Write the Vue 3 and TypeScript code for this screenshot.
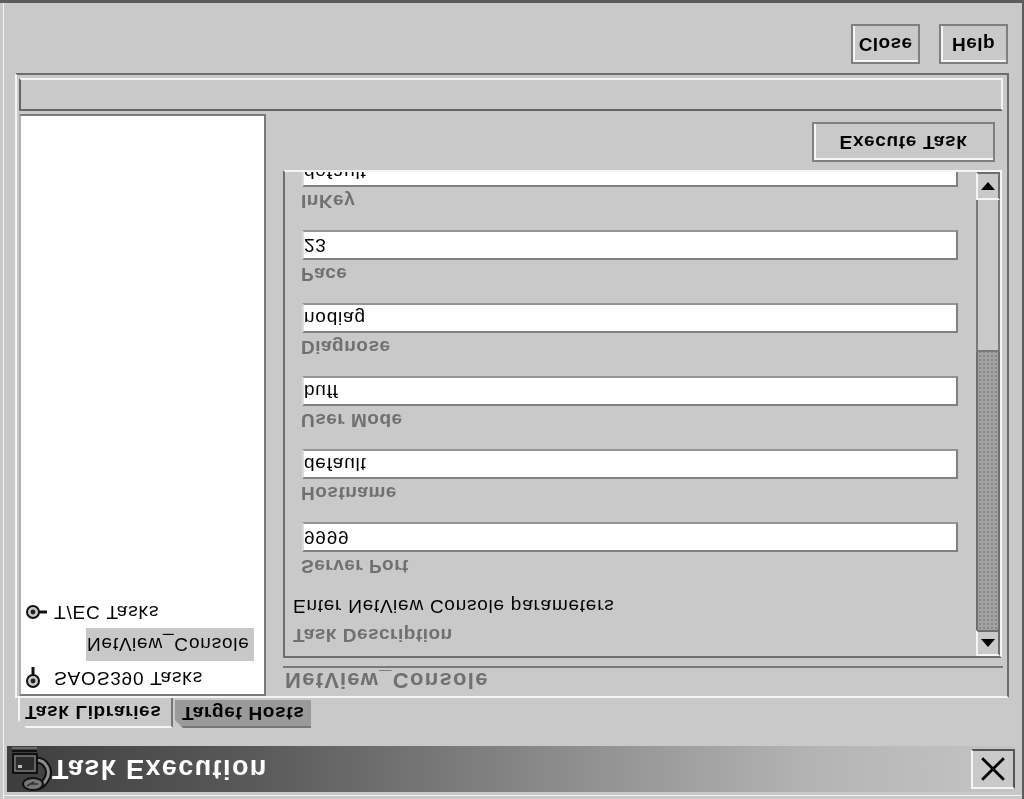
<script setup lang="ts">
interface Field { label: string; value: string }
const fields: Field[] = [
  { label: 'Server Port', value: '9999' },
  { label: 'Hostname', value: 'default' },
  { label: 'User Mode', value: 'buff' },
  { label: 'Diagnose', value: 'nodiag' },
  { label: 'Pace', value: '23' },
  { label: 'InKey', value: 'default' },
]
</script>

<template>
  <div class="window">
    <header class="title">
      <svg class="title-icon" viewBox="0 0 46 46" width="46" height="46">
        <path d="M28 32 C38 32 44 21 38 12 C35 7 32 5 28 5" fill="none" stroke="#111" stroke-width="7" />
        <path d="M28 32 C38 32 44 21 38 12 C35 7 32 5 28 5" fill="none" stroke="#8c8c8c" stroke-width="3" />
        <ellipse cx="25" cy="8" rx="10" ry="6" fill="#777" stroke="#111" stroke-width="2" />
        <path d="M21 8 H30 M19 6 L26 10" stroke="#333" stroke-width="1.5" />
        <rect x="5" y="19" width="24" height="19" fill="#2c2c2c" stroke="#111" stroke-width="2" />
        <rect x="7" y="21" width="20" height="15" fill="none" stroke="#9a9a9a" stroke-width="1" />
        <rect x="10" y="24" width="4" height="3" fill="#bbb" />
        <path d="M4 41 H29" stroke="#111" stroke-width="2" />
        <path d="M4 44 H29" stroke="#777" stroke-width="1.5" />
      </svg>
      <span class="title-text">Task Execution</span>
      <button class="close-x" type="button" aria-label="Close">
        <svg viewBox="0 0 24 24" width="26" height="26">
          <path d="M2 2 L22 22 M22 2 L2 22" stroke="#000" stroke-width="2.6" fill="none" />
        </svg>
      </button>
    </header>

    <nav class="tabs">
      <div class="tab active">Task Libraries</div>
      <div class="tab">Target Hosts</div>
    </nav>

    <section class="frame">
      <div class="main">
        <aside class="tree">
          <div class="node">
            <svg class="knob" viewBox="0 0 16 22" width="16" height="22">
              <circle cx="8" cy="8" r="6" fill="#c8c8c8" stroke="#111" stroke-width="2" />
              <circle cx="8" cy="8" r="2.4" fill="#222" />
              <path d="M8 14 V22" stroke="#111" stroke-width="3" />
            </svg>
            <span>SAOS390 Tasks</span>
          </div>
          <div class="leaf"><span class="selected">NetView_Console</span></div>
          <div class="node">
            <svg class="knob" viewBox="0 0 22 16" width="22" height="16">
              <circle cx="8" cy="8" r="6" fill="#c8c8c8" stroke="#111" stroke-width="2" />
              <circle cx="8" cy="8" r="2.4" fill="#222" />
              <path d="M14 8 H22" stroke="#111" stroke-width="3" />
            </svg>
            <span class="tec">T/EC Tasks</span>
          </div>
        </aside>

        <div class="detail">
          <div class="detail-head">NetView_Console</div>
          <div class="panel">
            <div class="scroll-content">
              <div class="caption">Task Description</div>
              <div class="description">Enter NetView Console parameters</div>
              <div v-for="f in fields" :key="f.label" class="field">
                <div class="caption">{{ f.label }}</div>
                <div class="input">{{ f.value }}</div>
              </div>
            </div>
            <div class="scrollbar">
              <div class="arrow">
                <svg viewBox="0 0 14 8" width="14" height="8"><path d="M0 8 H14 L7 0 Z" fill="#000" /></svg>
              </div>
              <div class="trough"></div>
              <div class="thumb"></div>
              <div class="arrow last">
                <svg viewBox="0 0 14 8" width="14" height="8"><path d="M0 0 H14 L7 8 Z" fill="#000" /></svg>
              </div>
            </div>
          </div>
          <div class="run-row">
            <button class="btn run" type="button">Execute Task</button>
          </div>
        </div>
      </div>
      <div class="status"></div>
    </section>

    <footer class="actions">
      <button class="btn small" type="button">Close</button>
      <button class="btn small" type="button">Help</button>
    </footer>
  </div>
</template>

<style scoped>
.window {
  width: 1024px;
  height: 799px;
  box-sizing: border-box;
  padding-top: 7px;
  overflow: hidden;
  background: #c9c9c9;
  color: #000;
  font: 19px "Liberation Sans", Arial, sans-serif;
  transform: scaleY(-1);
  filter: blur(0.6px);
  box-shadow:
    inset 0 -3px 0 #5c5c5c,
    inset -2px 0 0 #5c5c5c,
    inset 3px 0 0 #c9c9c9,
    inset 4px 0 0 #f2f2f2,
    inset 0 3px 0 #c9c9c9,
    inset 0 4px 0 #f2f2f2;
}

.title {
  height: 46px;
  margin: 0 9px 0 7px;
  display: flex;
  align-items: center;
  background: linear-gradient(90deg, #3e3e3e 0%, #5a5a5a 25%, #8c8c8c 55%, #b4b4b4 80%, #c4c4c4 100%);
}
.title-icon { margin-left: 1px; flex: none; }
.title-text {
  margin-left: -2px;
  font-size: 27px;
  font-weight: 700;
  letter-spacing: 1.4px;
  color: #fff;
}
.close-x {
  margin-left: auto;
  width: 44px;
  height: 40px;
  padding: 0;
  display: flex;
  align-items: center;
  justify-content: center;
  background: #c9c9c9;
  border: 2px solid;
  border-color: #f5f5f5 #555 #555 #f5f5f5;
}

.tabs {
  height: 30px;
  margin: 18px 0 0 18px;
  display: flex;
  align-items: flex-start;
  gap: 2px;
}
.tab {
  height: 28px;
  width: 136px;
  box-sizing: border-box;
  padding-left: 7px;
  display: flex;
  align-items: center;
  background: #9a9a9a;
  border-top: 2px solid #777;
  font-weight: 700;
  letter-spacing: 0.65px;
  clip-path: polygon(8px 0, 100% 0, 100% 100%, 0 100%, 0 8px);
}
.tab.active {
  height: 30px;
  width: 155px;
  background: #c9c9c9;
  border-top: 2px solid #f5f5f5;
  border-left: 2px solid #f5f5f5;
  border-right: 2px solid #777;
  padding-left: 5px;
}

.frame {
  width: 994px;
  height: 625px;
  margin-left: 15px;
  box-sizing: border-box;
  padding: 0 4px 3px 2px;
  display: flex;
  flex-direction: column;
  border: 2px solid;
  border-color: #f5f5f5 #6e6e6e #6e6e6e #f5f5f5;
}
.main {
  flex: 1;
  min-height: 0;
  display: flex;
}
.status {
  height: 33px;
  margin-top: 3px;
  box-sizing: border-box;
  border: 2px solid;
  border-color: #666 #f5f5f5 #f5f5f5 #666;
}

.tree {
  width: 247px;
  box-sizing: border-box;
  flex: none;
  background: #fff;
  border: 2px solid #7a7a7a;
  border-left-color: #b0b0b0;
  padding-top: 1px;
}
.node {
  display: flex;
  align-items: center;
  height: 30px;
  padding-left: 4px;
  letter-spacing: 0.85px;
}
.node span { margin-left: 13px; }
.node .tec { margin-left: 7px; }
.knob { flex: none; }
.leaf {
  height: 36px;
  padding-left: 65px;
  display: flex;
  align-items: center;
  letter-spacing: 0.8px;
}
.selected {
  display: block;
  width: 168px;
  height: 33px;
  line-height: 33px;
  box-sizing: border-box;
  padding-left: 1px;
  background: #c8c8c8;
}

.detail {
  flex: 1;
  min-width: 0;
  padding-left: 17px;
  display: flex;
  flex-direction: column;
}
.detail-head {
  height: 28px;
  line-height: 32px;
  padding-left: 2px;
  font-size: 22px;
  font-weight: 700;
  color: #707070;
  letter-spacing: 1.3px;
  border-bottom: 2px solid #7a7a7a;
}
.panel {
  height: 488px;
  margin: 8px 1px 0 0;
  box-sizing: border-box;
  display: flex;
  overflow: hidden;
  border: 2px solid;
  border-color: #6e6e6e #f5f5f5 #f5f5f5 #6e6e6e;
}
.scroll-content {
  flex: 1;
  min-width: 0;
  padding: 10px 18px 0 8px;
}
.caption {
  font-weight: 700;
  color: #707070;
  line-height: 22px;
  letter-spacing: 0.5px;
}
.description {
  margin-top: 7px;
  line-height: 22px;
  letter-spacing: 0.75px;
}
.field { padding: 18px 0 0 9px; }
.field .caption { margin-left: -1px; }
.input {
  height: 30px;
  margin-top: 3px;
  box-sizing: border-box;
  padding-left: 0;
  line-height: 26px;
  background: #fff;
  border: 2px solid;
  border-color: #808080 #808080 #949494 #dcdcdc;
  letter-spacing: 0.8px;
}

.scrollbar {
  width: 24px;
  flex: none;
  display: flex;
  flex-direction: column;
}
.arrow {
  height: 26px;
  box-sizing: border-box;
  display: flex;
  align-items: center;
  justify-content: center;
  border: 2px solid;
  border-color: #f5f5f5 #6e6e6e #6e6e6e #f5f5f5;
}
.arrow.last { height: 28px; }
.trough {
  height: 278px;
  background-color: #a4a4a4;
  background-image: radial-gradient(#868686 1px, transparent 1.2px);
  background-size: 4px 4px;
  border-left: 2px solid #6e6e6e;
  border-right: 2px solid #6e6e6e;
}
.thumb {
  height: 152px;
  box-sizing: border-box;
  border: solid #7a7a7a;
  border-width: 2px 2px 0;
}

.run-row {
  display: flex;
  justify-content: flex-end;
  margin-top: 8px;
  padding-right: 8px;
}
.btn {
  box-sizing: border-box;
  padding: 0;
  background: #c9c9c9;
  font: 700 19px "Liberation Sans", Arial, sans-serif;
  color: #000;
  border: 2px solid #808080;
  box-shadow: inset 2px 2px 0 #f5f5f5;
}
.run {
  width: 183px;
  height: 40px;
  letter-spacing: 0.65px;
}

.actions {
  margin-top: 9px;
  padding-right: 16px;
  display: flex;
  justify-content: flex-end;
  gap: 19px;
}
.small {
  width: 69px;
  height: 40px;
  letter-spacing: 0.4px;
}
</style>
